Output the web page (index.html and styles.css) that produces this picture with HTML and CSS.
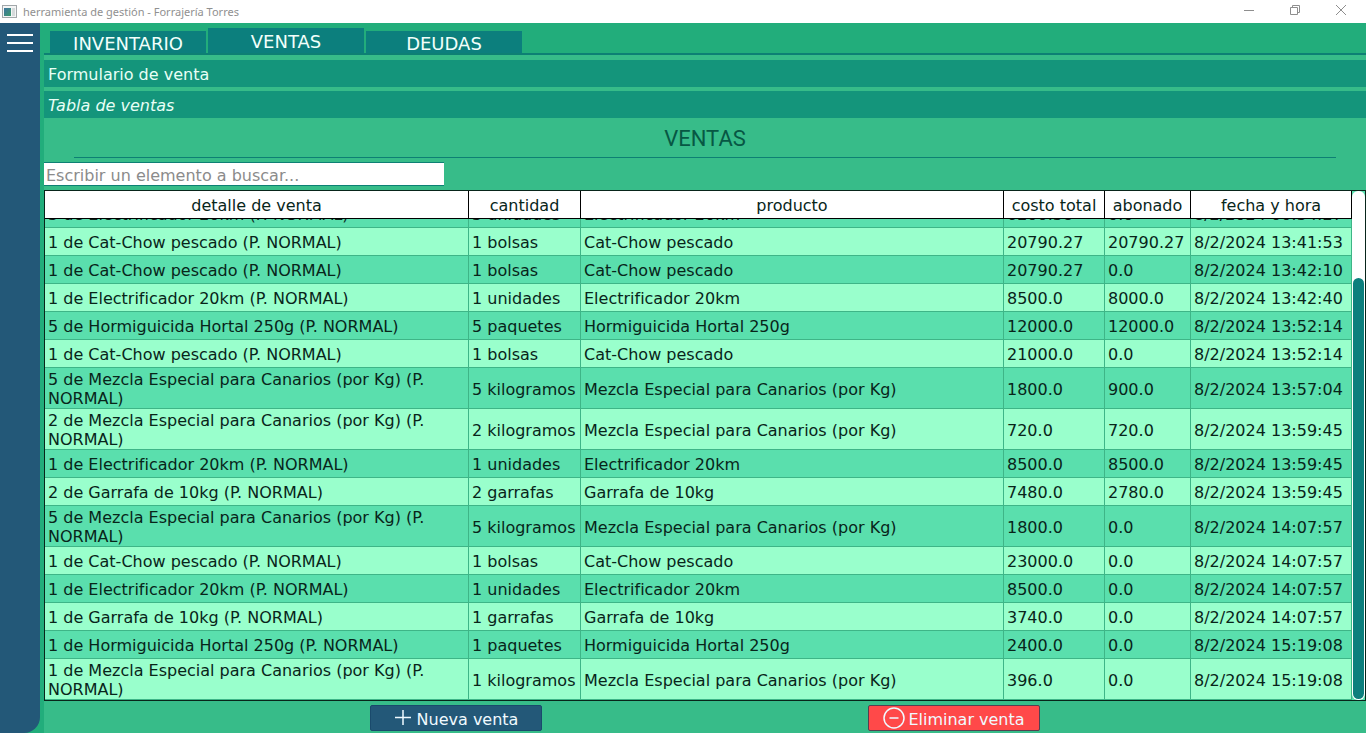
FILE: index.html
```html
<!DOCTYPE html>
<html lang="es">
<head>
<meta charset="utf-8">
<title>herramienta de gestión - Forrajería Torres</title>
<link rel="stylesheet" href="styles.css">
</head>
<body>
<header class="titlebar">
  <svg class="app-icon" width="15" height="13" viewBox="0 0 15 13" aria-hidden="true">
    <defs><linearGradient id="pane" x1="0" y1="0" x2="1" y2="1"><stop offset="0" stop-color="#3f74a0"/><stop offset="1" stop-color="#3c9a6c"/></linearGradient></defs>
    <rect x=".5" y=".5" width="14" height="12" fill="#f4f5f5" stroke="#a2a7aa"/>
    <rect x="2" y="3" width="7" height="8" fill="url(#pane)"/>
    <rect x="10" y="3" width="3" height="8" fill="#d5dadb"/>
  </svg>
  <span class="window-title">herramienta de gestión - Forrajería Torres</span>
  <div class="window-controls">
    <button aria-label="Minimizar"><svg width="12" height="12" viewBox="0 0 12 12"><path d="M1 6.500h10"/></svg></button>
    <button aria-label="Restaurar"><svg width="12" height="12" viewBox="0 0 12 12"><path d="M1.500 3.500h7v7h-7zM3.500 3.500v-2h7v7h-2"/></svg></button>
    <button aria-label="Cerrar"><svg width="12" height="12" viewBox="0 0 12 12"><path d="M1 1l10 10M11 1L1 11"/></svg></button>
  </div>
</header>
<div class="app">
  <aside class="sidebar">
    <button class="menu" aria-label="Menú"><svg width="26" height="20" viewBox="0 0 26 20"><path d="M0 2h26M0 10h26M0 18h26" stroke="#fff" stroke-width="2"/></svg></button>
  </aside>
  <main class="main">
    <nav class="tabs">
      <button class="tab">INVENTARIO</button>
      <button class="tab tab-active">VENTAS</button>
      <button class="tab">DEUDAS</button>
    </nav>
    <section class="content">
      <button class="fold">Formulario de venta</button>
      <button class="fold fold-open">Tabla de ventas</button>
      <h1 class="heading">VENTAS</h1>
      <input class="search" type="text" aria-label="Buscar" placeholder="Escribir un elemento a buscar...">
      <div class="table-frame">
        <div class="table-scroll">
          <table class="sales">
            <colgroup><col class="col-detail"><col class="col-amount"><col><col class="col-cost"><col class="col-paid"><col class="col-date"></colgroup>
            <thead><tr><th>detalle de venta</th><th>cantidad</th><th>producto</th><th>costo total</th><th>abonado</th><th>fecha y hora</th></tr></thead>
            <tbody>
              <tr><td>3 de Electrificador 20km (P. NORMAL)</td><td>3 unidades</td><td>Electrificador 20km</td><td>6200.38</td><td>0.0</td><td>8/2/2024 00:34:27</td></tr>
              <tr><td>1 de Cat-Chow pescado (P. NORMAL)</td><td>1 bolsas</td><td>Cat-Chow pescado</td><td>20790.27</td><td>20790.27</td><td>8/2/2024 13:41:53</td></tr>
              <tr><td>1 de Cat-Chow pescado (P. NORMAL)</td><td>1 bolsas</td><td>Cat-Chow pescado</td><td>20790.27</td><td>0.0</td><td>8/2/2024 13:42:10</td></tr>
              <tr><td>1 de Electrificador 20km (P. NORMAL)</td><td>1 unidades</td><td>Electrificador 20km</td><td>8500.0</td><td>8000.0</td><td>8/2/2024 13:42:40</td></tr>
              <tr><td>5 de Hormiguicida Hortal 250g (P. NORMAL)</td><td>5 paquetes</td><td>Hormiguicida Hortal 250g</td><td>12000.0</td><td>12000.0</td><td>8/2/2024 13:52:14</td></tr>
              <tr><td>1 de Cat-Chow pescado (P. NORMAL)</td><td>1 bolsas</td><td>Cat-Chow pescado</td><td>21000.0</td><td>0.0</td><td>8/2/2024 13:52:14</td></tr>
              <tr><td>5 de Mezcla Especial para Canarios (por Kg) (P. NORMAL)</td><td>5 kilogramos</td><td>Mezcla Especial para Canarios (por Kg)</td><td>1800.0</td><td>900.0</td><td>8/2/2024 13:57:04</td></tr>
              <tr><td>2 de Mezcla Especial para Canarios (por Kg) (P. NORMAL)</td><td>2 kilogramos</td><td>Mezcla Especial para Canarios (por Kg)</td><td>720.0</td><td>720.0</td><td>8/2/2024 13:59:45</td></tr>
              <tr><td>1 de Electrificador 20km (P. NORMAL)</td><td>1 unidades</td><td>Electrificador 20km</td><td>8500.0</td><td>8500.0</td><td>8/2/2024 13:59:45</td></tr>
              <tr><td>2 de Garrafa de 10kg (P. NORMAL)</td><td>2 garrafas</td><td>Garrafa de 10kg</td><td>7480.0</td><td>2780.0</td><td>8/2/2024 13:59:45</td></tr>
              <tr><td>5 de Mezcla Especial para Canarios (por Kg) (P. NORMAL)</td><td>5 kilogramos</td><td>Mezcla Especial para Canarios (por Kg)</td><td>1800.0</td><td>0.0</td><td>8/2/2024 14:07:57</td></tr>
              <tr><td>1 de Cat-Chow pescado (P. NORMAL)</td><td>1 bolsas</td><td>Cat-Chow pescado</td><td>23000.0</td><td>0.0</td><td>8/2/2024 14:07:57</td></tr>
              <tr><td>1 de Electrificador 20km (P. NORMAL)</td><td>1 unidades</td><td>Electrificador 20km</td><td>8500.0</td><td>0.0</td><td>8/2/2024 14:07:57</td></tr>
              <tr><td>1 de Garrafa de 10kg (P. NORMAL)</td><td>1 garrafas</td><td>Garrafa de 10kg</td><td>3740.0</td><td>0.0</td><td>8/2/2024 14:07:57</td></tr>
              <tr><td>1 de Hormiguicida Hortal 250g (P. NORMAL)</td><td>1 paquetes</td><td>Hormiguicida Hortal 250g</td><td>2400.0</td><td>0.0</td><td>8/2/2024 15:19:08</td></tr>
              <tr><td>1 de Mezcla Especial para Canarios (por Kg) (P. NORMAL)</td><td>1 kilogramos</td><td>Mezcla Especial para Canarios (por Kg)</td><td>396.0</td><td>0.0</td><td>8/2/2024 15:19:08</td></tr>
            </tbody>
          </table>
        </div>
        <div class="scrollbar"><div class="thumb"></div></div>
      </div>
      <footer class="actions">
        <button class="action"><svg width="18" height="18" viewBox="0 0 18 18" aria-hidden="true"><path d="M9 1v15M1 8.500h16"/></svg><span>Nueva venta</span></button>
        <button class="action action-delete"><svg width="22" height="22" viewBox="0 0 22 22" aria-hidden="true"><circle cx="11" cy="11" r="10"/><path d="M6.500 11h9"/></svg><span>Eliminar venta</span></button>
      </footer>
    </section>
  </main>
</div>
</body>
</html>
```
FILE: styles.css
```css
* { box-sizing: border-box; }
body {
  margin: 0;
  height: 100vh;
  display: flex;
  flex-direction: column;
  overflow: hidden;
  background: #22ad7b;
  color: #08251a;
  font: 16px/19px Verdana, "DejaVu Sans", sans-serif;
}
button { font: inherit; color: inherit; border: 0; padding: 0; background: none; }
svg { fill: none; flex: none; display: block; }

.titlebar {
  height: 23px;
  flex: none;
  display: flex;
  align-items: center;
  gap: 6px;
  padding-left: 2px;
  background: #fff;
  color: #909090;
  font: 11px/16px "Noto Sans", "Open Sans", sans-serif;
}
.window-controls { margin-left: auto; display: flex; align-self: stretch; padding: 0 2px 3px 0; }
.window-controls button { width: 46px; display: grid; place-items: center; }
.window-controls svg { stroke: #8e8e8e; }

.app { flex: 1; min-height: 0; display: flex; }
.sidebar { width: 40px; flex: none; background: #235878; border-bottom-right-radius: 16px; }
.menu { width: 40px; height: 40px; display: grid; place-items: center; }

.main { flex: 1; min-width: 0; display: flex; flex-direction: column; padding-left: 4px; }
.tabs {
  height: 32px;
  flex: none;
  display: flex;
  align-items: flex-end;
  gap: 2px;
  padding-left: 6px;
  border-bottom: 2px solid #0d8074;
}
.tab { width: 156px; height: 22px; padding-top: 2px; background: #0c7f7d; color: #f2fffb; font-size: 18px; line-height: 22px; }
.tab-active { height: 25px; }

.content { flex: 1; min-height: 0; display: flex; flex-direction: column; padding-top: 5px; background: #37bc89; }
.fold {
  height: 27px;
  flex: none;
  margin-bottom: 4px;
  padding: 2px 4px 0;
  background: #14957b;
  color: #e8fff6;
  text-align: left;
}
.fold-open { font-style: italic; margin-bottom: 0; }
.heading {
  height: 40px;
  flex: none;
  margin: 0 30px 4px;
  border-bottom: 1px solid #0d8074;
  color: #075744;
  font: 22px/42px Roboto, sans-serif;
  text-align: center;
}
.search {
  width: 400px;
  height: 24px;
  flex: none;
  margin-bottom: 4px;
  padding: 2px 2px 0;
  border: solid #0d8074;
  border-width: 1px 0;
  background: #fff;
  font: inherit;
}
.search::placeholder { color: #8b8b8b; opacity: 1; }

.table-frame { flex: 1; min-height: 0; display: flex; border: 1px solid #08251a; background: #5adfad; }
/* column-reverse opens the list scrolled to its latest sale */
.table-scroll { flex: 1; min-width: 0; display: flex; flex-direction: column-reverse; overflow-y: auto; scrollbar-width: none; }
.sales { width: 100%; flex: none; table-layout: fixed; border-spacing: 0; }
.col-detail { width: 424px; }
.col-amount { width: 112px; }
.col-cost { width: 101px; }
.col-paid { width: 86px; }
.col-date { width: 161px; }
.sales th {
  position: sticky;
  top: 0;
  height: 28px;
  padding: 2px 0 0;
  background: #fff;
  border: solid #000;
  border-width: 0 1px 1px 0;
  font-weight: normal;
}
.sales td { height: 28px; padding: 2px 0 0 3px; border: solid #3eb587; border-width: 0 1px 1px 0; }
.sales tr:nth-child(odd) td { background: #5adfad; }
.sales tr:nth-child(even) td { background: #99ffcc; }
.scrollbar {
  width: 13px;
  flex: none;
  display: flex;
  flex-direction: column;
  justify-content: flex-end;
  padding: 1px;
  border-radius: 6px;
  background: #fff;
}
.thumb { height: 83%; border-radius: 6px; background: #0c7f7d; }

.actions { height: 32px; flex: none; display: flex; justify-content: space-evenly; padding: 4px 0 2px; }
.action {
  width: 172px;
  display: flex;
  align-items: center;
  justify-content: center;
  gap: 5px;
  border: 1px solid #1a4a6c;
  border-radius: 2px;
  background: #235878;
  color: #f0faff;
}
.action span { padding-top: 2px; }
.action svg { stroke: currentColor; stroke-width: 1.5; }
.action-delete { gap: 3px; background: #ff4949; border-color: #534050; }
```
